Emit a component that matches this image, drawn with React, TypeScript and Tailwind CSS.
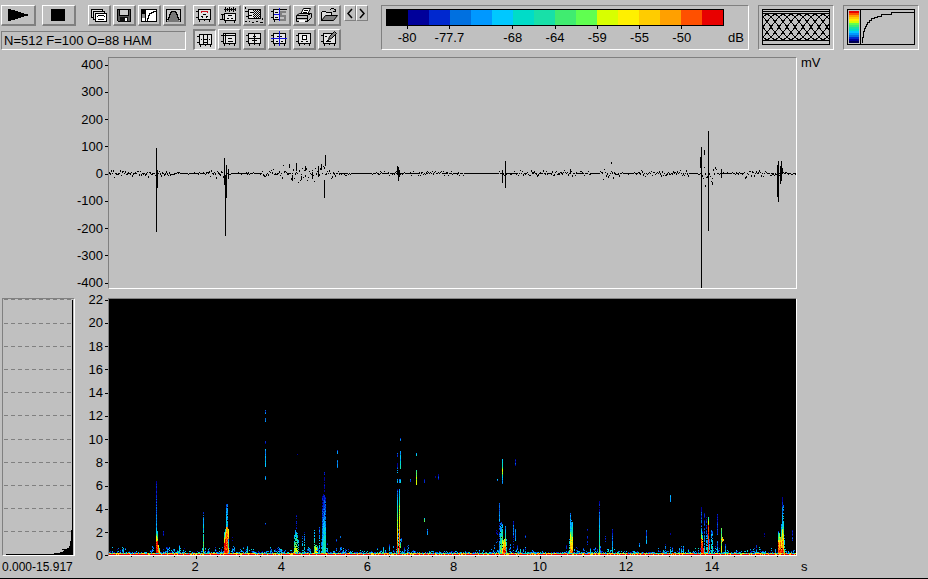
import React from "react";

const PALETTE = [
  "#000000", "#00009a", "#0028cf", "#0070e0", "#0098ff", "#00c8ff", "#00dcc8", "#18e0a8",
  "#40ec70", "#60ff50", "#d8ff00", "#fff000", "#ffcc00", "#ffa000", "#ff5000", "#e80000",
];

// Seconds covered by the width of the time axis
const AXIS_SPAN = 15.97;

const LEVELS = [
  { label: "-80", col: 1 },
  { label: "-77.7", col: 3 },
  { label: "-68", col: 6 },
  { label: "-64", col: 8 },
  { label: "-59", col: 10 },
  { label: "-55", col: 12 },
  { label: "-50", col: 14 },
];

const MILLIVOLTS = [400, 300, 200, 100, 0, -100, -200, -300, -400];
const KILOHERTZ = [22, 20, 18, 16, 14, 12, 10, 8, 6, 4, 2, 0];
const SECONDS = [2, 4, 6, 8, 10, 12, 14];

// Small seeded generator so the traces are the same on every render
const createRandom = (seed: number) => () => {
  seed = (seed * 1664525 + 1013904223) % 4294967296;
  return seed / 4294967296;
};

// Noise sections of the oscillogram: [end x, amplitude]
const NOISE = [
  [47, 4], [62, 3], [100, 1], [118, 4], [153, 1], [171, 4], [216, 9], [227, 5], [243, 2],
  [262, 0], [361, 2], [388, 0], [411, 2], [466, 3], [491, 2], [511, 6], [527, 1], [581, 3],
  [591, 1], [608, 10], [636, 1], [656, 4], [687, 2],
];

// Clicks: [x, top, bottom]
const CLICKS = [
  [47, 90, 174], [48, 112, 130], [115, 100, 127], [116, 117, 178], [117, 107, 140], [119, 111, 121],
  [180, 106, 110], [183, 117, 123], [187, 105, 113], [192, 118, 122], [196, 108, 113], [203, 114, 121],
  [209, 108, 119], [212, 106, 112], [215, 122, 140], [216, 97, 108],
  [288, 108, 117], [289, 109, 123], [290, 112, 119], [393, 112, 117], [393, 114, 125], [396, 103, 130],
  [461, 111, 116], [502, 104, 106], [591, 99, 110], [592, 89, 230], [595, 92, 97], [596, 127, 129],
  [599, 73, 173], [603, 124, 127], [612, 111, 120], [668, 107, 139], [669, 103, 144],
  [671, 108, 126], [672, 103, 123], [673, 110, 116],
];

const buildWaveform = () => {
  const random = createRandom(7);
  let path = "";
  let section = 0;
  for (let x = 0; x < 687; x++) {
    while (x >= NOISE[section][0]) section++;
    const amp = NOISE[section][1];
    const r = random() * 2 - 1;
    const y = 115 + Math.round(r * Math.abs(r) * amp);
    const h = amp > 2 && random() > 0.55 ? 2 : 1;
    path += `M${x} ${y}h1v${h}h-1z`;
    if (amp < 3 && random() > 0.45) path += `M${x} 115h1v1h-1z`;
  }
  CLICKS.forEach(([x, top, bottom]) => {
    path += `M${x} ${top}h1V${bottom}h-1z`;
  });
  return path;
};

// Row where a burst meets the baseline of the spectrogram
const FLOOR = 254;

// Bursts: [x, top, bottom, level at top, level at bottom, density]
const BURSTS = [
  [47, 182, 205, 1, 2, 1], [47, 205, 234, 2, 5, 1], [47, 234, 243, 8, 13, 1], [47, 243, FLOOR, 15, 15, 1],
  [48, 232, 242, 5, 11, 1], [48, 242, FLOOR, 15, 15, 1], [49, 246, FLOOR, 11, 15, 1], [50, 249, FLOOR, 6, 12, 1],
  [54, 232, 237, 1, 2, 1], [58, 248, FLOOR, 2, 7, 1], [70, 246, FLOOR, 3, 8, 1],
  [94, 213, FLOOR, 3, 9, 0.85], [99, 247, FLOOR, 2, 5, 0.5], [100, 249, FLOOR, 2, 5, 0.6],
  [115, 233, 244, 4, 13, 1], [115, 244, FLOOR, 15, 15, 1], [116, 230, 240, 7, 14, 1], [116, 240, FLOOR, 15, 15, 1],
  [117, 205, 228, 3, 6, 1], [117, 228, FLOOR, 12, 15, 1], [118, 205, 228, 3, 5, 0.9],
  [118, 228, FLOOR, 13, 15, 1], [119, 230, 240, 9, 14, 1], [119, 240, FLOOR, 4, 13, 1],
  [123, 235, 245, 1, 1, 0.4], [138, 247, FLOOR, 4, 7, 1],
  [156, 111, 115, 2, 3, 1], [156, 119, 123, 3, 4, 1], [156, 142, 145, 2, 2, 1],
  [156, 150, 168, 4, 5, 1], [156, 177, 181, 4, 4, 1], [156, 224, 226, 2, 2, 1],
  [185, 236, FLOOR, 4, 11, 0.7], [186, 231, FLOOR, 4, 11, 0.9], [187, 214, 232, 1, 2, 0.5], [187, 232, FLOOR, 5, 12, 0.9],
  [188, 234, FLOOR, 4, 11, 0.8], [189, 240, FLOOR, 3, 8, 0.7], [193, 236, FLOOR, 2, 7, 0.6], [195, 232, FLOOR, 2, 7, 0.6],
  [205, 231, FLOOR, 4, 9, 0.9], [206, 246, FLOOR, 8, 13, 1], [207, 246, FLOOR, 8, 13, 0.8], [208, 247, FLOOR, 5, 11, 0.8],
  [210, 228, FLOOR, 2, 6, 0.7], [212, 240, FLOOR, 2, 5, 0.6],
  [213, 197, 230, 1, 3, 0.9], [213, 230, FLOOR, 3, 6, 0.9], [214, 195, 220, 1, 3, 1], [214, 220, FLOOR, 4, 7, 1],
  [215, 173, 197, 1, 1, 0.7], [215, 197, FLOOR, 2, 8, 1], [216, 197, 225, 1, 4, 0.9], [216, 225, FLOOR, 4, 7, 1],
  [218, 244, FLOOR, 1, 5, 0.6], [227, 240, 243, 2, 2, 1], [228, 151, 155, 3, 4, 1], [228, 161, 169, 3, 4, 1],
  [231, 237, 239, 2, 3, 1], [188, 155, 156, 1, 1, 1],
  [274, 248, FLOOR, 4, 9, 1], [280, 244, FLOOR, 2, 5, 0.8],
  [288, 154, 158, 2, 3, 1], [288, 164, 174, 1, 4, 0.8], [288, 180, 184, 4, 5, 1], [290, 180, 184, 3, 5, 1],
  [288, 190, 215, 2, 8, 1], [288, 215, FLOOR, 8, 15, 1], [289, 230, FLOOR, 1, 10, 0.6],
  [290, 190, 206, 4, 8, 1], [290, 206, FLOOR, 9, 15, 1], [291, 139, 142, 3, 3, 1], [291, 152, 170, 4, 7, 1],
  [291, 180, 184, 4, 5, 1], [291, 240, 250, 3, 11, 0.8], [292, 238, 243, 3, 4, 0.7], [301, 180, 183, 2, 3, 1],
  [307, 154, 157, 4, 7, 1], [307, 171, 186, 8, 10, 1], [315, 180, 184, 1, 2, 1],
  [315, 219, 223, 6, 8, 1], [318, 230, 236, 3, 5, 1], [329, 175, 181, 1, 2, 1], [326, 177, 179, 1, 1, 1],
  [295, 248, FLOOR, 1, 4, 0.6], [298, 247, FLOOR, 2, 4, 0.7], [299, 246, FLOOR, 2, 5, 0.6],
  [387, 231, 245, 1, 3, 0.4], [388, 180, 182, 4, 4, 1], [388, 231, FLOOR, 1, 4, 0.4],
  [390, 204, 222, 2, 5, 1], [390, 222, FLOOR, 2, 4, 0.7], [391, 224, FLOOR, 3, 10, 0.9], [392, 223, FLOOR, 3, 9, 0.9],
  [393, 160, 169, 5, 8, 1], [393, 169, 176, 10, 9, 1], [393, 176, 185, 5, 3, 1], [393, 225, FLOOR, 5, 12, 0.9],
  [394, 240, FLOOR, 8, 15, 0.9], [395, 240, FLOOR, 11, 15, 1], [396, 227, FLOOR, 3, 15, 1], [397, 240, FLOOR, 4, 9, 0.8],
  [404, 222, 236, 2, 4, 1], [404, 236, 250, 1, 2, 0.6], [406, 160, 167, 1, 2, 1], [406, 230, 242, 3, 4, 1],
  [416, 236, 239, 1, 4, 1], [411, 250, FLOOR, 5, 9, 1],
  [460, 240, FLOOR, 4, 9, 0.8], [461, 214, 233, 3, 6, 1], [461, 233, FLOOR, 9, 14, 1],
  [462, 221, 235, 3, 7, 0.9], [462, 235, FLOOR, 8, 14, 1], [463, 223, 238, 4, 8, 1], [463, 238, FLOOR, 10, 14, 1],
  [478, 230, 246, 1, 3, 0.6], [481, 249, FLOOR, 3, 7, 1], [490, 213, 235, 3, 6, 1], [490, 235, FLOOR, 6, 9, 1],
  [490, 202, 213, 1, 1, 0.5], [496, 237, 244, 1, 2, 0.8], [503, 230, 242, 1, 3, 1], [503, 242, FLOOR, 3, 6, 1],
  [530, 244, 248, 3, 5, 1], [537, 231, 245, 2, 5, 1], [561, 196, 203, 4, 5, 1], [561, 233, 236, 1, 2, 0.7],
  [556, 245, FLOOR, 2, 5, 0.8], [561, 248, FLOOR, 2, 5, 0.7], [563, 247, FLOOR, 2, 5, 0.7],
  [572, 247, FLOOR, 2, 5, 0.9], [574, 247, FLOOR, 2, 6, 0.7],
  [592, 208, 230, 1, 3, 0.9], [592, 230, 240, 4, 12, 1], [592, 240, FLOOR, 14, 15, 1], [593, 232, 243, 1, 12, 0.8],
  [593, 243, FLOOR, 15, 15, 1], [594, 249, FLOOR, 14, 15, 1], [595, 214, FLOOR, 1, 5, 0.75], [597, 218, FLOOR, 1, 6, 0.7],
  [598, 235, FLOOR, 2, 6, 0.6], [599, 218, 226, 7, 11, 1], [599, 226, FLOOR, 15, 14, 1], [600, 240, FLOOR, 2, 7, 0.8],
  [602, 231, FLOOR, 3, 7, 0.8], [603, 232, FLOOR, 3, 7, 0.8], [608, 215, 236, 1, 3, 1], [608, 240, FLOOR, 2, 5, 0.9],
  [612, 229, FLOOR, 8, 10, 1], [613, 238, 243, 13, 11, 1], [614, 240, 242, 11, 11, 1], [616, 245, FLOOR, 2, 6, 1],
  [645, 249, FLOOR, 2, 5, 0.8], [647, 246, FLOOR, 2, 5, 0.7], [655, 234, 238, 1, 2, 0.8],
  [669, 232, 243, 3, 11, 0.9], [669, 243, FLOOR, 14, 15, 1], [670, 234, FLOOR, 8, 15, 1],
  [671, 238, FLOOR, 12, 15, 1], [672, 225, FLOOR, 3, 15, 0.9], [673, 198, 230, 1, 6, 1], [673, 230, FLOOR, 10, 15, 1],
  [674, 206, 230, 3, 7, 0.7], [674, 230, FLOOR, 8, 13, 1], [675, 236, FLOOR, 3, 9, 0.7], [683, 231, 242, 1, 2, 0.8],
];

// Returns one path per palette colour
const buildSpectrogram = () => {
  const random = createRandom(23);
  const paths = PALETTE.map(() => "");
  const plot = (x: number, y: number, level: number) => {
    const index = Math.max(1, Math.min(15, Math.round(level)));
    paths[index] += `M${x} ${y}h1v1h-1z`;
  };

  // Low frequency background, livelier around the bursts
  for (let x = 0; x < 687; x++) {
    const near = BURSTS.some((b) => b[2] === FLOOR && Math.abs(b[0] - x) < 8);
    const busy = x < 30 || (x > 155 && x < 240) || (x > 555 && x < 580);
    const reach = random() * (near || busy ? 9 : 3) * random();
    for (let y = FLOOR - 1 - Math.floor(reach); y < FLOOR; y++) {
      if (random() > 0.4) plot(x, y, 1 + random() * 5);
    }
    plot(x, FLOOR, random() > 0.5 ? 10 + random() * 4 : 4 + random() * 5);
    plot(x, FLOOR + 1, random() > 0.2 ? 15 : 12);
  }

  BURSTS.forEach(([x, top, bottom, from, to, density]) => {
    for (let y = top; y < bottom; y++) {
      if (random() > density) continue;
      const t = (y - top) / (bottom - top);
      plot(x, y, from + (to - from) * t + (random() - 0.5) * 2.4);
    }
  });
  return paths;
};

const WAVEFORM = buildWaveform();
const SPECTROGRAM = buildSpectrogram();

const meshWave = (phase: number) => {
  let path = "";
  for (let x = 0; x <= 66; x++) {
    const y = 17 - 14 * Math.cos(((x + phase) / 64) * Math.PI * 2);
    path += `${x ? "L" : "M"}${x} ${y.toFixed(1)}`;
  }
  return path;
};

const MESH = [0, 8, 16, 24, 32, 40, 48, 56].map(meshWave);

const Icon = ({ children }: { children: React.ReactNode }) => (
  <svg className="block shrink-0 w-5 h-[18px]" viewBox="0 0 20 18" fill="none" stroke="#000" shapeRendering="crispEdges" aria-hidden="true">
    {children}
  </svg>
);

// Plot frame with its axis ticks, shared by most icons
const Frame = () => (
  <>
    <path d="M4.5 3.5h12v10h-12z" fill="#e4e4e4" />
    <path d="M2 5.5h2M2 11.5h2M5.5 14v2M10.5 14v1M15.5 14v2" />
  </>
);

const fileTools = [
  {
    name: "Copy",
    icon: (
      <>
        <path d="M2.5 3.5h11v8h-11z" fill="#ddd" />
        <path d="M4.5 5.5h11v8h-11z" fill="#ddd" />
        <path d="M6.5 7.5h11v8h-11z" fill="#fff" />
        <path d="M9 9.5h6M8 10.5h1M15 10.5h1M9 13.5h6" />
      </>
    ),
  },
  {
    name: "Save",
    icon: (
      <>
        <path d="M3.5 3.5h13v12h-12l-1-1z" fill="#555" />
        <path d="M6 4h8v5H6z" fill="#ccc" stroke="none" />
        <path d="M5.5 3v6M14.5 3v6M5 9.5h10" />
        <path d="M6 11h8v5H6z" fill="#111" stroke="none" />
        <path d="M11 12h2v3h-2z" fill="#fff" stroke="none" />
      </>
    ),
  },
  {
    name: "Transfer curve",
    icon: (
      <>
        <path d="M2.5 3.5h15v12h-15z" fill="#fff" />
        <path d="M3 4h3v4H3z" fill="#000" stroke="none" />
        <path d="M3 8h3v4H3z" fill="#888" stroke="none" />
        <path d="M6.5 4v11M8.5 15v-3h1v-3h1v-2h2v-1h2v-1h3" />
      </>
    ),
  },
  {
    name: "Window function",
    icon: (
      <>
        <path d="M2.5 3.5h14v12h-14z" fill="#ccc" />
        <path d="M3 15.5v-1h1v-2h1v-2h1v-3h1v-2h1v-1h3v1h1v2h1v3h1v2h1v2h1v1z" fill="#777" stroke="none" />
        <path d="M3.5 14v-1h1v-2h1v-3h1v-2h1v-1h4v1h1v2h1v3h1v2h1v1" />
      </>
    ),
  },
];

const plotTools = [
  {
    name: "Spectrum",
    icon: (
      <>
        <Frame />
        <path d="M7.5 7V5.5h6V7" stroke="#d01020" />
        <path d="M9 8.5h3M7 10.5h2M12 10.5h2M8 11.5h1M12 11.5h1" />
      </>
    ),
  },
  {
    name: "Spectrogram with waveform",
    icon: (
      <>
        <path d="M5 3.5h12M6.5 1v5M8.5 2v3M10.5 1v5M12.5 2v3M14.5 1v5M16.5 2v3" />
        <path d="M5.5 7.5h11v7h-11z" fill="#e4e4e4" />
        <path d="M2 8.5h3M3.5 8v6M1 13.5h4M6.5 15v2M15.5 15v2M9 9.5h4M8 12.5h2M12 12.5h2" />
      </>
    ),
  },
  {
    name: "Select range",
    icon: (
      <>
        <path d="M1.5 1v2M1.5 5v1M1 15.5h2M5 15.5h1M8 16.5h2M12 15.5h2M16 16.5h3M18.5 12v2" />
        <path d="M4.5 3.5h12v9h-12z" fill="#e4e4e4" />
        <path d="M6 6.5h3M5 9.5h3M2 5.5h2M2 10.5h2" />
        <path d="M9 4.5h7M9 6.5h7M9 8.5h7M9 10.5h7" strokeDasharray="1 1" />
        <path d="M10 5.5h6M10 7.5h6M10 9.5h6M10 11.5h6" strokeDasharray="1 1" />
      </>
    ),
  },
  {
    name: "Cursor spectrum",
    icon: (
      <>
        <path d="M4 3h6v11H4z" fill="#e4e4e4" stroke="none" />
        <path d="M4.5 14V3.5h13M2 5.5h2M2 11.5h2M4 13.5h6M5.5 14v2M6 6.5h3M6 11.5h3" />
        <path d="M17 6h-5v4h4v4h-5" stroke="#808080" strokeWidth="2" />
        <path d="M10.5 2v13M5 8.5h6" stroke="#1010e0" />
      </>
    ),
  },
  {
    name: "Print",
    icon: (
      <>
        <path d="M6.5 8.5l3-6h7l-3 6z" fill="#fff" shapeRendering="auto" />
        <path d="M10 4.5h4M9 6.5h4" />
        <path d="M2.5 9.5l3-2h12v4l-4 4h-11z" fill="#bbb" shapeRendering="auto" />
        <path d="M3 9.5h10v6M3 12.5h10M13 9.5l4-2" />
        <path d="M5 14h6v2H5z" fill="#fff" stroke="none" />
      </>
    ),
  },
  {
    name: "Open",
    icon: (
      <>
        <path d="M2.5 14.5v-8l1-1h3l1 1h5v3" fill="#ddd" />
        <path d="M2.5 14.5l4-5h12l-4 5z" fill="#808080" shapeRendering="auto" />
        <path d="M11 3.5h1M12 2.5h3M15 3.5h1M16.5 3v3M14 5.5h3" />
      </>
    ),
  },
  {
    name: "Vertical markers",
    pressed: true,
    icon: (
      <>
        <Frame />
        <path d="M8.5 4v10M12.5 4v10" />
        <path d="M6 8.5h1M9 8.5h3M14 8.5h1M9 11.5h3" />
      </>
    ),
  },
  {
    name: "Axes",
    icon: (
      <>
        <Frame />
        <path d="M5 5.5h11M6.5 4v10M9 8.5h4M9 11.5h5" />
      </>
    ),
  },
  {
    name: "Crosshair",
    icon: (
      <>
        <Frame />
        <path d="M10.5 4v10M5 8.5h11M9 6.5h3M8 10.5h5" />
      </>
    ),
  },
  {
    name: "Linked crosshair",
    icon: (
      <>
        <Frame />
        <path d="M8 6.5h5M7 11.5h2M12 11.5h2" />
        <path d="M10.5 1v15M2 8.5h16" stroke="#1010e0" />
      </>
    ),
  },
  {
    name: "Box marker",
    icon: (
      <>
        <Frame />
        <path d="M8.5 5.5h4v4h-4z" fill="#fff" />
        <path d="M7 11.5h2M12 11.5h2" />
      </>
    ),
  },
  {
    name: "Annotate",
    icon: (
      <>
        <Frame />
        <path d="M9.5 9.5l1-3 5-5 2 2-5 5z" fill="#808080" shapeRendering="auto" />
        <path d="M8 10.5h2M6 6.5h2M7 11.5h5" />
      </>
    ),
  },
];

const buttonClass =
  "flex items-center justify-center h-[21px] border-t border-l border-b-2 border-r-2 border-t-white border-l-white border-b-[#808080] border-r-[#808080]";
const sunkenClass = "border border-t-[#808080] border-l-[#808080] border-b-white border-r-white";

const AxisLabels = ({ values }: { values: number[] }) => (
  <div className="flex flex-1 flex-col justify-between">
    {values.map((value) => (
      <div key={value} className="flex items-center justify-end gap-0.5 leading-4">
        <span>{value}</span>
        <span className="w-[3px] h-px bg-black" />
      </div>
    ))}
  </div>
);

const Toolbar = () => (
  <header className="flex items-start pt-[5px] pb-[7px] pr-[9px]">
    {/* Playback, file tools and analysis settings */}
    <div className="w-[186px] pl-px">
      <div className="flex gap-0.5">
        <button type="button" aria-label="Play" className={`${buttonClass} w-[35px] mr-1`}>
          <svg className="w-5 h-3" viewBox="0 0 20 12" shapeRendering="crispEdges" aria-hidden="true">
            <path d="M0 0h3v1h4v1h3v1h3v1h3v1h4v2h-4v1h-3v1h-3v1h-3v1H3v1H0z" />
          </svg>
        </button>
        <button type="button" aria-label="Stop" className={`${buttonClass} w-[35px] mr-2.5`}>
          <span className="w-3.5 h-3 bg-black" />
        </button>
        {fileTools.map((tool) => (
          <button key={tool.name} type="button" aria-label={tool.name} className={`${buttonClass} w-[23px]`}>
            <Icon>{tool.icon}</Icon>
          </button>
        ))}
      </div>
      <div className={`${sunkenClass} mt-[5px] h-[19px] leading-[18px] whitespace-nowrap pl-0.5`}>N=512 F=100 O=88 HAM</div>
    </div>

    {/* Display tools */}
    <div className="ml-[7px] grid grid-cols-6 gap-x-0.5 gap-y-[3px]">
      {plotTools.map((tool) => (
        <button
          key={tool.name}
          type="button"
          aria-label={tool.name}
          aria-pressed={tool.pressed}
          className={
            tool.pressed
              ? "flex items-center justify-center w-[23px] h-[21px] bg-[#d4d4d4] border-t-2 border-l-2 border-b border-r border-t-[#808080] border-l-[#808080] border-b-white border-r-white"
              : `${buttonClass} w-[23px]`
          }
        >
          <Icon>{tool.icon}</Icon>
        </button>
      ))}
    </div>
    <div className="ml-[3px] flex">
      {["M7 2L3 6.5 7 11", "M3 2l4 4.5L3 11"].map((d, i) => (
        <button
          key={d}
          type="button"
          aria-label={i ? "Next" : "Previous"}
          className="flex items-center justify-center w-3 h-4 border border-t-white border-l-white border-b-[#808080] border-r-[#808080]"
        >
          <svg className="w-2.5 h-3" viewBox="0 0 10 12" fill="none" stroke="#000" strokeWidth="1.5" aria-hidden="true">
            <path d={d} />
          </svg>
        </button>
      ))}
    </div>

    {/* Level legend */}
    <div className={`${sunkenClass} ml-auto w-[368px] h-[45px] pt-[3px] pl-1`}>
      <div className="grid grid-cols-[repeat(16,1fr)] w-[338px] h-[17px] border border-black">
        {PALETTE.map((color) => (
          <span key={color} style={{ backgroundColor: color }} />
        ))}
      </div>
      <div className="flex">
        <div className="grid grid-cols-[repeat(16,1fr)] w-[338px]">
          {LEVELS.map((level) => (
            <div key={level.label} className="flex flex-col items-center" style={{ gridColumn: `${level.col} / span 2` }}>
              <span className="w-px h-[3px] bg-black" />
              <span className="leading-4 mt-px">{level.label}</span>
            </div>
          ))}
        </div>
        <span className="leading-4 mt-1 ml-1">dB</span>
      </div>
    </div>

    {/* Overlap preview */}
    <div className={`${sunkenClass} ml-[9px] w-[76px] h-[45px] p-[3px]`}>
      <svg className="w-[68px] h-9" viewBox="0 0 68 36" fill="none" stroke="#000" role="img" aria-label="Window overlap">
        <path d="M.5 .5h67v35H.5zM0 2.5h68" shapeRendering="crispEdges" />
        <g transform="translate(1 1)" shapeRendering="crispEdges">
          {MESH.map((d) => (
            <path key={d} d={d} />
          ))}
        </g>
      </svg>
    </div>

    {/* Color mapping curve */}
    <div className={`${sunkenClass} ml-[9px] w-[76px] h-[45px] p-[3px]`}>
      <svg className="w-[68px] h-9" viewBox="0 0 68 36" fill="none" stroke="#000" shapeRendering="crispEdges" role="img" aria-label="Color mapping">
        {PALETTE.map((color, i) => (
          <rect key={color} x="2" y={32 - i * 2} width="10" height="2" fill={i ? color : "#000050"} stroke="none" />
        ))}
        <path d="M.5 .5h67v35H.5zM13.5 0v36" />
        <path d="M15.5 34v-6h1v-6h1v-3h1v-2h1v-2h1v-2h2v-2h2v-2h3v-1h3v-1h4v-2h10v-2h22" />
      </svg>
    </div>
  </header>
);

const App = () => {
  return (
    <div className="bg-[#c0c0c0] text-black text-[13px] font-['Liberation_Sans',Arial,sans-serif] border-b border-black">
      <Toolbar />

      <main className="grid grid-cols-[108px_1fr_131px]">
        {/* Oscillogram */}
        <div className="flex -mb-0.5">
          <AxisLabels values={MILLIVOLTS} />
        </div>
        <div className={sunkenClass}>
          <svg className="block w-full h-[230px]" viewBox="0 0 687 230" preserveAspectRatio="none" shapeRendering="crispEdges" role="img" aria-label="Oscillogram">
            <path d={WAVEFORM} />
          </svg>
        </div>
        <div className="pl-1 -mt-0.5 leading-4">mV</div>

        {/* Mean spectrum and frequency axis */}
        <div className="flex pl-0.5 mt-[9px]">
          <div className={`${sunkenClass} w-[73px]`}>
            <svg className="block w-full h-64" viewBox="0 0 71 256" preserveAspectRatio="none" shapeRendering="crispEdges" role="img" aria-label="Mean spectrum">
              {KILOHERTZ.slice(0, -1).map((value) => {
                const y = Math.round(255.5 - value * 11.6) + 0.5;
                return <path key={value} d={`M1 ${y}H69`} stroke="#808080" strokeDasharray="4 3" />;
              })}
              <path d="M69 1h1v255H3v-1h48v-1h6v-1h3v-1h1v-1h-2v-1h5v-1h2v-2h1v-5h1v-11h1z" />
            </svg>
          </div>
          <div className="flex flex-1 -mt-1.5 -mb-2">
            <AxisLabels values={KILOHERTZ} />
          </div>
        </div>

        {/* Spectrogram */}
        <div className={`${sunkenClass} mt-[9px] bg-black`}>
          <svg className="block w-full h-64" viewBox="0 0 687 256" preserveAspectRatio="none" shapeRendering="crispEdges" role="img" aria-label="Spectrogram">
            {SPECTROGRAM.map((d, i) => (
              <path key={PALETTE[i]} d={d} fill={PALETTE[i]} />
            ))}
          </svg>
        </div>
        <div />

        {/* Time axis */}
        <div className="h-[22px] pl-0.5 pt-[3px] text-xs leading-4">0.000-15.917</div>
        <div>
          <svg className="block w-full h-[3px]" viewBox="0 0 689 3" preserveAspectRatio="none" shapeRendering="crispEdges" aria-hidden="true">
            {Array.from({ length: 31 }).map((_, i) => (
              <rect key={i} x={Math.round(1.5 + (i + 1) * 21.52)} y="0" width="1" height={(i + 1) % 4 === 0 ? 3 : 1} />
            ))}
          </svg>
          <div className="flex leading-4 pl-px">
            <span style={{ width: `${100 / AXIS_SPAN}%` }} />
            {SECONDS.map((second) => (
              <span key={second} className="text-center" style={{ width: `${200 / AXIS_SPAN}%` }}>
                {second}
              </span>
            ))}
          </div>
        </div>
        <div className="pl-1 pt-[3px] leading-4">s</div>
      </main>
    </div>
  );
};

export default App;
